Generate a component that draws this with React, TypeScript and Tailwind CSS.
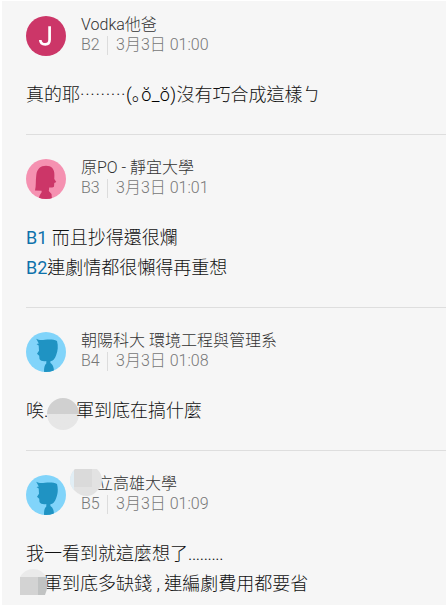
import type { ReactNode } from "react";

function LetterAvatar() {
  return (
    <svg className="size-10 shrink-0" viewBox="0 0 40 40">
      <circle cx="20" cy="20" r="20" fill="#cc3668" />
      <path d="M23.6 10.2v13.6c0 2.9-1.5 4.6-4.3 4.6-3 0-4.9-1.4-5-4.4" fill="none" stroke="#fff" strokeWidth="2.7" />
    </svg>
  );
}

function GirlAvatar() {
  return (
    <svg className="size-10 shrink-0" viewBox="0 0 40 40">
      <clipPath id="girl"><circle cx="20" cy="20" r="20" /></clipPath>
      <circle cx="20" cy="20" r="20" fill="#f591b1" />
      <path
        clipPath="url(#girl)"
        fill="#cc3668"
        d="M9 31.5C10.2 27 9.5 22 10.3 16C11 10 14.5 6.8 20 6.8C25.5 6.8 28.6 10 28.4 16L28.3 20L30.3 23L28.3 24L28 27.5C27.5 28.8 25.5 28.5 23.2 28.5L22.8 32L25.5 35L26 40H13C12.8 37 14.4 35.2 15.6 33.2V31.8Z"
      />
    </svg>
  );
}

function BoyAvatar() {
  return (
    <svg className="size-10 shrink-0" viewBox="0 0 40 40">
      <clipPath id="boy"><circle cx="20" cy="20" r="20" /></clipPath>
      <circle cx="20" cy="20" r="20" fill="#81d4fa" />
      <path
        clipPath="url(#boy)"
        fill="#1f93c3"
        d="M10.2 6.7C12.5 8.2 15 8.2 19 7.8C24 7.3 28 7.5 31 9C32.4 14 31.8 19 30.2 23C29 27 27 28.8 24.4 29.3V31C26.5 32.5 28 34.5 28 40H18C18 35.5 18.5 33 20.3 31.5V29C17.5 29.7 14.6 29 13.5 27L13.2 23.7L11 21.8L13 18.7L12.7 13.5L10.5 12L12.8 11.5Z"
      />
    </svg>
  );
}

function Comment(props: { avatar: ReactNode; name: ReactNode; floor: string; time: string; children: ReactNode }) {
  return (
    <article className="border-b border-[#dedede] py-6 last:border-b-0">
      <header className="flex h-10 gap-[15px]">
        {props.avatar}
        <div className="-mt-px text-base leading-5 font-light whitespace-nowrap">
          <div className="h-5 text-[#333]">{props.name}</div>
          <div className="flex h-5 items-center text-[#777]">
            <span className="w-[26px]">{props.floor}</span>
            <span className="mr-2 h-[19px] w-px bg-[#dcdcdc]" />
            <span>{props.time}</span>
          </div>
        </div>
      </header>
      <div className="mt-6 text-lg leading-[30px] whitespace-nowrap text-[#111]">{props.children}</div>
    </article>
  );
}

export default function App() {
  return (
    <main
      lang="zh-Hant"
      className="h-[605px] w-[446px] overflow-hidden border-t border-l-2 border-white bg-[#f6f6f6] pl-6 font-[Roboto,'Noto_Sans_CJK_TC',sans-serif] font-light"
    >
      <div className="-mt-[9px]">
        <Comment avatar={<LetterAvatar />} name="Vodka他爸" floor="B2" time="3月3日 01:00">
          真的耶<span className="inline-block w-[46px] tracking-[0.7px]">·········</span>
          <span className="tracking-[0.3px] text-black">(｡ŏ_ŏ)</span>沒有巧合成這樣ㄅ
        </Comment>
        <Comment avatar={<GirlAvatar />} name="原PO - 靜宜大學" floor="B3" time="3月3日 01:01">
          <div><span className="font-normal text-[#0e72ab]">B1</span> 而且抄得還很爛</div>
          <div><span className="font-normal text-[#0e72ab]">B2</span>連劇情都很懶得再重想</div>
        </Comment>
        <Comment avatar={<BoyAvatar />} name="朝陽科大 環境工程與管理系" floor="B4" time="3月3日 01:08">
          <div className="flex">
            <span className="w-[21px]">唉.</span>
            <span className="relative w-[29px]">
              <span className="absolute top-0.5 left-0 size-8 rounded-full bg-linear-to-b from-[#d0d0d0] from-50% to-[#e6e6e6] to-50%" />
            </span>
            <span className="relative">軍到底在搞什麼</span>
          </div>
        </Comment>
        <Comment
          avatar={<BoyAvatar />}
          name={
            <span className="relative flex pl-4">
              立高雄大學
              <svg className="absolute -top-[5px] -left-[11px] h-[27px] w-8" viewBox="0 0 32 27">
                <clipPath id="name-mask"><path d="M5 0H27Q32 5 32 11Q32 18 26 23Q22 27 17 27Q10 27 5 22Q0 17 0 12Q0 5 5 0Z" /></clipPath>
                <g clipPath="url(#name-mask)">
                  <path fill="#e2e2e2" d="M0 0H32V27H0Z" />
                  <path fill="#e1eef5" d="M0 0H4V22H0Z" />
                  <path fill="#dadada" d="M4 0H22V18H4Z" />
                </g>
              </svg>
            </span>
          }
          floor="B5"
          time="3月3日 01:09"
        >
          <div>我一看到就這麼想了<span className="inline-block w-9 tracking-[-0.4px]">.........</span></div>
          <div className="relative pl-[18px]">
            軍到底多缺錢 , 連編劇費用都要省
            <svg className="absolute top-0 -left-1.5 h-[26px] w-7" viewBox="0 0 28 26">
              <path fill="#eaeaea" d="M0 8Q5 0 13 0Q22 0 26 8Z" />
              <path fill="#d3d3d3" d="M0 8H18V26H0Z" />
              <path fill="#c1c3c3" d="M18 8H26Q29 17 25 26H18Z" />
            </svg>
          </div>
        </Comment>
      </div>
    </main>
  );
}
